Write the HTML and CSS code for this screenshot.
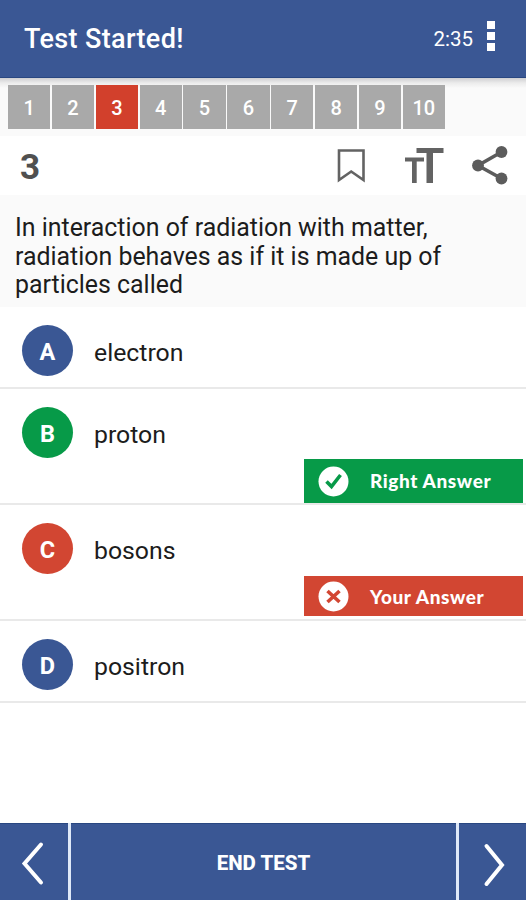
FILE: index.html
```html
<!DOCTYPE html>
<html lang="en">
<head>
<meta charset="utf-8">
<title>Test Started!</title>
<link rel="stylesheet" href="styles.css">
</head>
<body>
<header class="appbar">
  <h1>Test Started!</h1>
  <span class="timer">2:35</span>
  <div class="more"><i></i><i></i><i></i></div>
</header>
<nav class="pager">
  <span>1</span><span>2</span><span class="current">3</span><span>4</span><span>5</span><span>6</span><span>7</span><span>8</span><span>9</span><span>10</span>
</nav>
<section class="tools">
  <strong>3</strong>
  <svg width="200" height="59" viewBox="326 136 200 59">
    <path d="M339 150.500H363.500V180L351.200 171.500L339 180Z" fill="none" stroke="#636363" stroke-width="2.600"/>
    <path d="M416.500 148H443.500V153H433V183H426.500V153H416.500ZM405 157.500H424V161.500H416.700V183H412V161.500H405Z" fill="#636363"/>
    <path d="M501.500 152L478 165.500L501.500 178.500" fill="none" stroke="#5c5c5c" stroke-width="3.600"/>
    <g fill="#5c5c5c"><circle cx="501.500" cy="152" r="5.900"/><circle cx="478" cy="165.500" r="5.900"/><circle cx="501.500" cy="178.500" r="5.900"/></g>
  </svg>
</section>
<p class="question">In interaction of radiation with matter,<br>radiation behaves as if it is made up of<br>particles called</p>
<main class="answers">
  <div class="answer"><b class="letter">A</b><span class="label">electron</span></div>
  <div class="answer tall"><b class="letter right">B</b><span class="label">proton</span>
    <div class="tag right">
      <svg width="31" height="31" viewBox="0 0 31 31"><circle cx="15.500" cy="15.500" r="15" fill="#fff"/><path d="M8.500 15.500L13.500 20.500L22.500 9" fill="none" stroke="#079a48" stroke-width="3.600"/></svg>
      <span>Right Answer</span>
    </div>
  </div>
  <div class="answer tall"><b class="letter wrong">C</b><span class="label">bosons</span>
    <div class="tag wrong">
      <svg width="31" height="31" viewBox="0 0 31 31"><circle cx="15.500" cy="15.500" r="15" fill="#fff"/><path d="M9.500 10L21.500 21M21.500 10L9.500 21" fill="none" stroke="#d24632" stroke-width="3.600"/></svg>
      <span>Your Answer</span>
    </div>
  </div>
  <div class="answer"><b class="letter">D</b><span class="label">positron</span></div>
</main>
<footer class="bottom">
  <div class="side"><svg width="68" height="77" viewBox="0 823 68 77"><path d="M41 843.500L24.500 862.500L41 881.500" fill="none" stroke="#fff" stroke-width="4" stroke-linecap="round"/></svg></div>
  <div class="end">END TEST</div>
  <div class="side"><svg width="67" height="77" viewBox="459 823 67 77"><path d="M486.500 845L502 864L486.500 883" fill="none" stroke="#fff" stroke-width="4" stroke-linecap="round"/></svg></div>
</footer>
</body>
</html>
```
FILE: styles.css
```css
* { box-sizing: border-box; }
body {
  margin: 0;
  height: 900px;
  display: flex;
  flex-direction: column;
  background: #fff;
  font-family: Roboto, "Liberation Sans", sans-serif;
  color: #1c1c1c;
  overflow: hidden;
}
svg { display: block; flex: none; }
.appbar {
  height: 78px;
  flex: none;
  display: flex;
  align-items: center;
  padding: 0 31px 0 24px;
  background: #3a5794;
  border-bottom: 1px solid #294781;
  color: #fff;
}
.appbar h1 { margin: 0; flex: 1; font-size: 27px; font-weight: 500; letter-spacing: .35px; white-space: nowrap; }
.timer { font-size: 20.500px; }
.more { display: flex; flex-direction: column; gap: 3px; margin: 0 0 5px 14px; }
.more i { width: 8px; height: 8px; background: #fff; }
.pager {
  height: 58px;
  flex: none;
  display: flex;
  gap: 1.500px;
  padding: 7px 81px 7px 8px;
  background: linear-gradient(#cfcfd2, #ececec 5px, #fafafa 10px);
}
.pager span {
  flex: 1 1 0;
  display: flex;
  align-items: center;
  justify-content: center;
  padding-top: 2px;
  background: #a9a9a9;
  color: #fff;
  font-size: 20px;
  font-weight: 500;
}
.pager .current { background: #d2402c; }
.tools {
  height: 59px;
  flex: none;
  display: flex;
  align-items: center;
  justify-content: space-between;
  padding-left: 20px;
}
.tools strong { font-size: 35px; color: #505050; padding-top: 3px; }
.question {
  margin: 0;
  height: 112px;
  flex: none;
  padding: 19px 0 0 15px;
  background: #fafafa;
  font-size: 24.900px;
  line-height: 28.700px;
  white-space: nowrap;
}
.answers { flex: 1; }
.answer {
  position: relative;
  height: 82px;
  display: flex;
  align-items: flex-start;
  padding: 18px 0 0 22px;
  border-bottom: 2px solid #e9e9e9;
}
.answer.tall { height: 116px; }
.answer .letter {
  width: 51px;
  height: 51px;
  border-radius: 50%;
  display: flex;
  align-items: center;
  justify-content: center;
  background: #3a5794;
  color: #fff;
  font-size: 23.500px;
  padding-top: 2px;
}
.label { margin-left: 21px; font-size: 24.800px; line-height: 56px; }
.answer .right { background: #079a48; }
.answer .wrong { background: #d24632; }
.tag {
  position: absolute;
  right: 3px;
  top: 70px;
  width: 219px;
  height: 44px;
  display: flex;
  align-items: center;
  padding-left: 14px;
  color: #fff;
  font: 900 19px/24px Lato, "Open Sans", sans-serif;
  letter-spacing: .6px;
}
.tag.wrong { height: 40px; top: 71px; }
.tag span { margin-left: 21px; white-space: nowrap; }
.tag.wrong span { padding-top: 2px; }
.bottom {
  height: 77px;
  flex: none;
  display: grid;
  grid-template-columns: 68px 1fr 67px;
  gap: 3px;
  background: #dfe9f8;
}
.bottom > div { background: #3a5794; border-top: 1px solid #294781; }
.bottom .end {
  display: flex;
  align-items: center;
  justify-content: center;
  color: #fff;
  font-size: 20.500px;
  font-weight: 800;
}
```
